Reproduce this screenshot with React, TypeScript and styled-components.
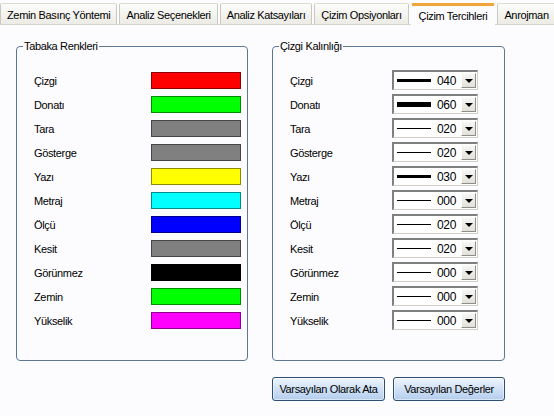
import React from 'react'
import styled, { createGlobalStyle } from 'styled-components'

const GlobalStyle = createGlobalStyle`
  body {
    margin: 0;
    background-color: #fcfcfe;
    font-family: 'Liberation Sans', Arial, sans-serif;
    font-size: 11px;
    letter-spacing: -0.35px;
    color: #000;
  }
`

const Window = styled.div`
	width: 554px;
	height: 416px;
	overflow: hidden;
	display: flex;
	flex-direction: column;
	background-color: #fcfcfe;
`

const TabStrip = styled.div`
	height: 24px;
	display: flex;
	align-items: flex-end;
	gap: 2px;
	border-bottom: 1px solid #d6d5cc;
	background-color: #fcfcfe;
`

const Tab = styled.div<{ $active?: boolean }>`
	height: ${(p) => (p.$active ? '22px' : '21px')};
	padding: 0 ${(p) => (p.$active ? '7px' : '6px')};
	display: flex;
	align-items: center;
	white-space: nowrap;
	box-sizing: border-box;
	border: 1px solid ${(p) => (p.$active ? '#fcfcfe' : '#c9c8bf')};
	border-bottom: none;
	border-top: ${(p) => (p.$active ? '3px solid #f2a53a' : '1px solid #dedcd2')};
	border-radius: 2px 2px 0 0;
	background: ${(p) =>
		p.$active ? '#fcfcfe' : 'linear-gradient(#fcfcfa, #ecebe5)'};
	margin-bottom: ${(p) => (p.$active ? '-1px' : '0')};
	padding-top: ${(p) => (p.$active ? '0' : '1px')};
`

const Page = styled.div`
	display: flex;
	flex-direction: column;
	padding: 15px 49px 0 16px;
`

const Groups = styled.div`
	display: flex;
	gap: 24px;
`

const Group = styled.fieldset<{ $width: number }>`
	margin: 0;
	width: ${(p) => p.$width}px;
	height: 321px;
	box-sizing: border-box;
	border: 1px solid #5d7694;
	border-radius: 4px;
	padding: 15px 0 0 17px;
	background-color: #fcfcfe;
`

const Legend = styled.legend`
	padding: 0 1px;
	margin-left: -11px;
	line-height: 13px;
	font-size: 11px;
	color: #000;
`

const Row = styled.div<{ $labelWidth: number }>`
	height: 24px;
	display: grid;
	grid-template-columns: ${(p) => p.$labelWidth}px auto;
	align-items: center;
`

const Label = styled.span`
	font-size: 11px;
	padding-top: 1px;
`

const Swatch = styled.div<{ $color: string }>`
	width: 90px;
	height: 17px;
	box-sizing: border-box;
	background-color: ${(p) => p.$color};
	border: 1px solid rgba(0, 0, 0, 0.45);
`

const Combo = styled.div`
	width: 86px;
	height: 20px;
	box-sizing: border-box;
	display: flex;
	align-items: center;
	background-color: #fff;
	border-top: 2px solid #808080;
	border-left: 2px solid #808080;
	border-right: 1px solid #d4d0c8;
	border-bottom: 1px solid #d4d0c8;
	padding-left: 3px;
`

const LineSample = styled.div<{ $weight: number }>`
	width: 34px;
	height: ${(p) => p.$weight}px;
	background-color: #000;
`

const ComboValue = styled.span`
	font-size: 12px;
	margin-left: 6px;
	width: 23px;
	letter-spacing: -0.3px;
`

const ComboButton = styled.div`
	width: 15px;
	height: 15px;
	margin-left: 1px;
	box-sizing: border-box;
	display: flex;
	align-items: center;
	justify-content: center;
	background: linear-gradient(#f6f6f4, #e2e1da);
	border: 1px solid;
	border-color: #fff #8e8e8a #8e8e8a #fff;
`

const Arrow = styled.div`
	width: 0;
	height: 0;
	border-left: 4px solid transparent;
	border-right: 4px solid transparent;
	border-top: 4px solid #000;
`

const ButtonRow = styled.div`
	display: flex;
	justify-content: flex-end;
	gap: 8px;
	margin-top: 16px;
`

const Button = styled.button<{ $width: number }>`
	width: ${(p) => p.$width}px;
	height: 24px;
	padding: 0;
	font-family: 'Liberation Sans', Arial, sans-serif;
	font-size: 11px;
	letter-spacing: -0.35px;
	color: #000;
	border: 1px solid #2e4f75;
	border-radius: 3px;
	background: linear-gradient(#eef4fc 0%, #d3e3f6 45%, #b3cdee 100%);
	box-shadow: inset 0 0 0 1px rgba(255, 255, 255, 0.5);
`

const colors: [string, string][] = [
	['Çizgi', '#ff0000'],
	['Donatı', '#00ff00'],
	['Tara', '#808080'],
	['Gösterge', '#808080'],
	['Yazı', '#ffff00'],
	['Metraj', '#00ffff'],
	['Ölçü', '#0000ff'],
	['Kesit', '#808080'],
	['Görünmez', '#000000'],
	['Zemin', '#00ff00'],
	['Yükselik', '#ff00ff'],
]

const weights: [string, string, number][] = [
	['Çizgi', '040', 3],
	['Donatı', '060', 5],
	['Tara', '020', 1],
	['Gösterge', '020', 1],
	['Yazı', '030', 3],
	['Metraj', '000', 1],
	['Ölçü', '020', 1],
	['Kesit', '020', 1],
	['Görünmez', '000', 1],
	['Zemin', '000', 1],
	['Yükselik', '000', 1],
]

const tabs = [
	'Zemin Basınç Yöntemi',
	'Analiz Seçenekleri',
	'Analiz Katsayıları',
	'Çizim Opsiyonları',
	'Çizim Tercihleri',
	'Anrojman',
]

const App: React.FC = () => {
	return (
		<>
			<GlobalStyle />
			<Window>
				<TabStrip>
					{tabs.map((t) => (
						<Tab key={t} $active={t === 'Çizim Tercihleri'}>
							{t}
						</Tab>
					))}
				</TabStrip>
				<Page>
					<Groups>
						<Group $width={232}>
							<Legend>Tabaka Renkleri</Legend>
							{colors.map(([name, color]) => (
								<Row key={name} $labelWidth={117}>
									<Label>{name}</Label>
									<Swatch $color={color} />
								</Row>
							))}
						</Group>
						<Group $width={233}>
							<Legend>Çizgi Kalınlığı</Legend>
							{weights.map(([name, value, w]) => (
								<Row key={name} $labelWidth={102}>
									<Label>{name}</Label>
									<Combo>
										<LineSample $weight={w} />
										<ComboValue>{value}</ComboValue>
										<ComboButton>
											<Arrow />
										</ComboButton>
									</Combo>
								</Row>
							))}
						</Group>
					</Groups>
					<ButtonRow>
						<Button $width={113}>Varsayılan Olarak Ata</Button>
						<Button $width={112}>Varsayılan Değerler</Button>
					</ButtonRow>
				</Page>
			</Window>
		</>
	)
}

export default App
